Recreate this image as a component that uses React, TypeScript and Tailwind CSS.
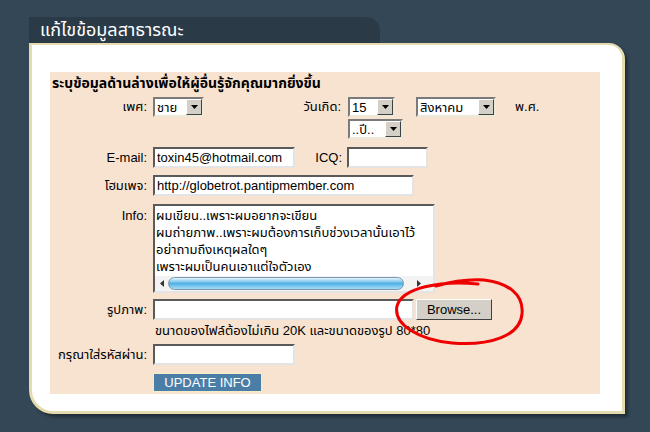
import React from "react";

const font = { fontFamily: "'Liberation Sans', Tahoma, 'Noto Sans Thai', 'Noto Sans', sans-serif" };

function Arrow() {
  return (
    <div className="w-[16px] h-[16px] bg-[#d4d0c8] border border-t-white border-l-white border-b-[#404040] border-r-[#404040] flex items-center justify-center shrink-0">
      <svg width="7" height="4" viewBox="0 0 7 4">
        <path d="M0 0H7L3.5 4Z" fill="#000" />
      </svg>
    </div>
  );
}

function Select({ value, width }: { value: string; width: number }) {
  return (
    <div
      className="h-[20px] bg-white border-2 border-t-[#7a7a7a] border-l-[#7a7a7a] border-b-[#ece9d8] border-r-[#ece9d8] flex items-center justify-between pl-[2px]"
      style={{ width }}
    >
      <span className="text-[13px] leading-none text-black">{value}</span>
      <Arrow />
    </div>
  );
}

function Input({ width, value }: { width: number; value?: string }) {
  return (
    <div
      className="h-[21px] bg-white border-2 border-t-[#5a5a5a] border-l-[#5a5a5a] border-b-[#e4e4e4] border-r-[#e4e4e4] flex items-center pl-[2px] overflow-hidden whitespace-nowrap text-[13px] text-black"
      style={{ width }}
    >
      {value}
    </div>
  );
}

function Label({ children }: { children: React.ReactNode }) {
  return <div className="w-[97px] text-right pr-[2px] text-[13px] text-black shrink-0">{children}</div>;
}

export default function App() {
  return (
    <div className="relative w-[650px] h-[432px] bg-[#344756] pt-[17px] pl-[29px] overflow-hidden" style={font}>
      <div className="w-[351px] h-[26px] bg-[#2a3a47] rounded-tr-[14px] pl-[11px] flex items-center text-white text-[18px]">
        แก้ไขข้อมูลสาธารณะ
      </div>
      <div className="w-[596px] h-[371px] bg-white border-[3px] border-t-2 border-[#e4dcae] rounded-tr-[16px] rounded-bl-[24px] shadow-[3px_3px_3px_rgba(0,0,0,0.35)] pl-[18px] pt-[27px]">
        <div className="w-[550px] h-[322px] bg-[#f7e3d0] pl-[2px] pt-[3px] flex flex-col">
          <div className="text-[14px] font-bold text-black leading-[16px]">
            ระบุข้อมูลด้านล่างเพื่อให้ผู้อื่นรู้จักคุณมากยิ่งขึ้น
          </div>

          <div className="flex items-start mt-[6px]">
            <div className="flex items-center h-[20px]">
              <Label>เพศ:</Label>
            </div>
            <div className="ml-[4px]">
              <Select value="ชาย" width={51} />
            </div>
            <div className="w-[137px] h-[20px] flex items-center justify-end text-[13px] text-black">วันเกิด:</div>
            <div className="ml-[7px] flex flex-col gap-[2px]">
              <div className="flex items-center">
                <Select value="15" width={47} />
                <div className="ml-[21px]">
                  <Select value="สิงหาคม" width={80} />
                </div>
                <span className="ml-[19px] text-[13px] text-black">พ.ศ.</span>
              </div>
              <Select value="..ปี.." width={55} />
            </div>
          </div>

          <div className="flex items-center mt-[8px]">
            <Label>E-mail:</Label>
            <div className="ml-[4px]">
              <Input width={142} value="toxin45@hotmail.com" />
            </div>
            <div className="w-[47px] text-right text-[13px] text-black">ICQ:</div>
            <div className="ml-[5px]">
              <Input width={81} />
            </div>
          </div>

          <div className="flex items-center mt-[7px]">
            <Label>โฮมเพจ:</Label>
            <div className="ml-[4px]">
              <Input width={261} value="http://globetrot.pantipmember.com" />
            </div>
          </div>

          <div className="flex items-start mt-[8px]">
            <div className="pt-[2px]">
              <Label>Info:</Label>
            </div>
            <div className="ml-[4px] w-[282px] h-[89px] bg-white border-2 border-t-[#5a5a5a] border-l-[#5a5a5a] border-b-[#e4e4e4] border-r-[#e4e4e4] flex flex-col">
              <div className="flex-1 overflow-hidden whitespace-pre pl-[1px] pt-[1px] text-[13px] leading-[17px] text-black">
                {"ผมเขียน..เพราะผมอยากจะเขียน\nผมถ่ายภาพ..เพราะผมต้องการเก็บช่วงเวลานั้นเอาไว้\nอย่าถามถึงเหตุผลใดๆ\nเพราะผมเป็นคนเอาแต่ใจตัวเอง"}
              </div>
              <div className="h-[15px] bg-[#f3f3f3] flex items-center px-[1px] gap-[1px]">
                <div className="w-[11px] h-[13px] flex items-center justify-center">
                  <svg width="4" height="7" viewBox="0 0 4 7">
                    <path d="M4 0V7L0 3.5Z" fill="#333" />
                  </svg>
                </div>
                <div className="w-[236px] h-[13px] rounded-full border border-[#7a98ad] bg-gradient-to-b from-[#e6f5fd] via-[#4fb2e6] to-[#a8dcf5]" />
                <div className="flex-1 h-[13px] flex items-center justify-center">
                  <svg width="4" height="7" viewBox="0 0 4 7">
                    <path d="M0 0V7L4 3.5Z" fill="#333" />
                  </svg>
                </div>
              </div>
            </div>
          </div>

          <div className="flex items-center mt-[6px]">
            <Label>รูปภาพ:</Label>
            <div className="ml-[4px]">
              <Input width={261} />
            </div>
            <div className="ml-[2px] w-[76px] h-[21px] bg-[#d4d0c8] border border-t-white border-l-white border-b-[#404040] border-r-[#404040] flex items-center justify-center text-[13px] text-black">
              Browse...
            </div>
          </div>
          <div className="ml-[103px] mt-[2px] text-[13px] text-black leading-[17px]">
            ขนาดของไฟล์ต้องไม่เกิน 20K และขนาดของรูป 80*80
          </div>

          <div className="flex items-center mt-[5px]">
            <Label>กรุณาใส่รหัสผ่าน:</Label>
            <div className="ml-[4px]">
              <Input width={142} />
            </div>
          </div>

          <div className="ml-[101px] mt-[8px] w-[109px] h-[19px] bg-[#4a7ea6] border border-[#f3ecc8] flex items-center justify-center text-white text-[13px]">
            UPDATE INFO
          </div>
        </div>
      </div>

      <svg className="absolute inset-0 pointer-events-none" width="650" height="432" viewBox="0 0 650 432">
        <path
          d="M478 284 C440 280 402 288 397 306 C393 325 420 340 452 343 C490 346 520 336 522 314 C524 294 508 283 484 280 C468 279 450 282 436 286"
          fill="none"
          stroke="#ee0000"
          strokeWidth="3"
          strokeLinecap="round"
        />
      </svg>
    </div>
  );
}
